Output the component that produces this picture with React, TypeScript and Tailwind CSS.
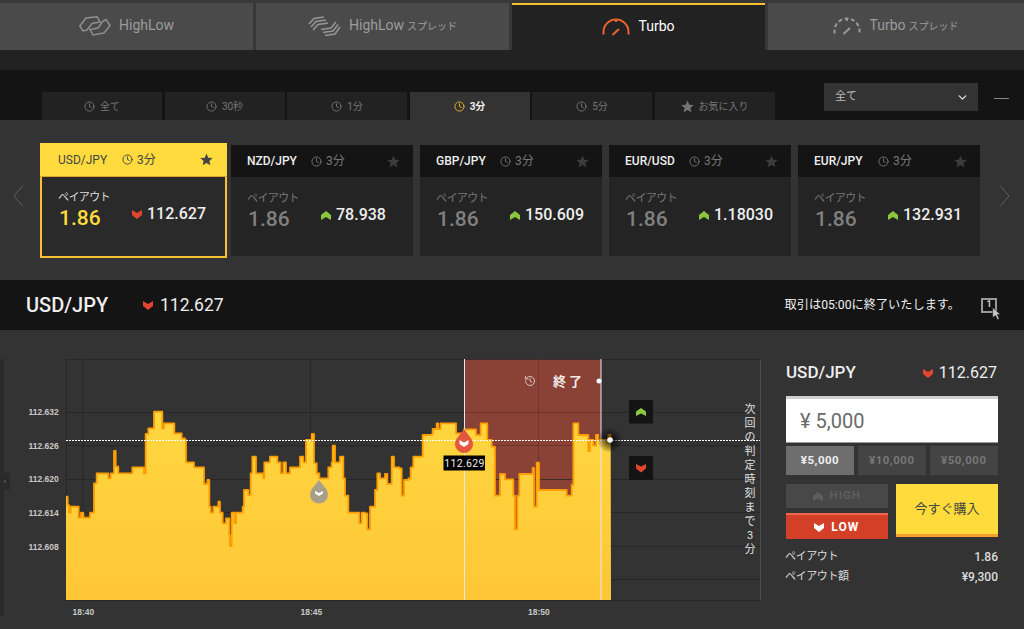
import { ChevronDown, Clock, History } from 'lucide-react'

const pairs = [
  { name: 'USD/JPY', price: '112.627', down: true, active: true },
  { name: 'NZD/JPY', price: '78.938' },
  { name: 'GBP/JPY', price: '150.609' },
  { name: 'EUR/USD', price: '1.18030' },
  { name: 'EUR/JPY', price: '132.931' },
]

const filters = ['全て', '30秒', '1分', '3分', '5分', 'お気に入り']

// traced off the reference, in 3x crop coordinates
const traceA = [
  [198, 440], [203, 465], [207, 488], [212, 470], [230, 470], [236, 503], [243, 488], [250, 503], [268, 503], [270, 488],
  [278, 488], [282, 400], [290, 370], [322, 370], [325, 385], [332, 370], [340, 370], [342, 303], [347, 350], [355, 370],
  [385, 370], [397, 352], [428, 352], [432, 370], [437, 252], [445, 235], [455, 235], [462, 185], [483, 185], [487, 235],
  [492, 220], [520, 220], [523, 250], [545, 265], [555, 270], [558, 337], [578, 337], [582, 352], [610, 352], [612, 402],
  [622, 390], [628, 470], [632, 488], [640, 470], [655, 455], [660, 488], [668, 520], [678, 505], [688, 555], [690, 588],
  [695, 488], [703, 520], [708, 488], [728, 470], [732, 420], [745, 435], [752, 370], [757, 320], [768, 370], [790, 385],
  [793, 337], [805, 337], [810, 320], [828, 320], [832, 337], [842, 370], [850, 337], [858, 370], [870, 352], [895, 352],
  [900, 320], [910, 337], [918, 270], [935, 252], [942, 340], [950, 370], [958, 385], [978, 385], [985, 352], [995, 337],
  [998, 287], [1005, 337], [1020, 320],
]
const traceB = [
  [10, 385], [15, 437], [25, 488], [50, 488], [58, 520], [65, 488], [75, 490], [82, 538], [90, 470], [105, 420],
  [112, 370], [120, 385], [135, 372], [142, 402], [155, 320], [162, 352], [178, 355], [185, 437], [192, 390], [205, 385],
  [212, 352], [220, 320], [240, 320], [248, 255], [275, 253], [278, 237], [290, 220], [295, 237], [302, 220], [330, 220],
  [348, 250], [372, 238], [398, 238], [408, 255], [422, 220], [438, 220], [442, 270], [455, 290], [465, 437], [480, 372],
  [490, 372], [495, 388], [510, 388], [520, 437], [525, 538], [532, 437], [538, 372], [578, 354], [582, 470], [590, 338],
  [597, 420], [665, 420], [680, 437], [695, 405], [700, 220], [715, 255], [735, 255], [745, 303], [750, 270], [760, 287],
  [768, 255], [775, 270], [805, 255], [812, 270],
]
const line = [
  ...traceA.map(([x, y]) => [x / 3, 350 + y / 3]),
  ...traceB.map(([x, y]) => [340 + x / 3, 350 + y / 3]),
]
const stepped = line.flatMap((p, i) => (i === 0 ? [p] : [[p[0], line[i - 1][1]], p]))
const linePts = stepped.map((p) => p.join(',')).join(' ')
const areaPts = `66,600 ${linePts} 611,600`

const yLabels = [
  ['112.632', 412],
  ['112.626', 445.5],
  ['112.620', 479],
  ['112.614', 512.5],
  ['112.608', 546.5],
] as const

function StarIcon({ className }: { className?: string }) {
  return (
    <svg viewBox="0 0 14 14" className={className} fill="currentColor">
      <path d="M7 0.5 L8.9 5 L13.7 5.4 L10.1 8.5 L11.2 13.3 L7 10.8 L2.8 13.3 L3.9 8.5 L0.3 5.4 L5.1 5 Z" />
    </svg>
  )
}

function Arrow({ down, className }: { down?: boolean; className?: string }) {
  return (
    <svg viewBox="0 0 10 9" className={className} fill="currentColor">
      {down ? <path d="M0 0 L5 3 L10 0 V5 L5 9 L0 5 Z" /> : <path d="M0 4 L5 0 L10 4 V9 L5 6 L0 9 Z" />}
    </svg>
  )
}

function HighLowIcon() {
  return (
    <svg viewBox="0 0 32 20" className="w-[32px] h-[20px]" fill="none" stroke="#8f8f8f" strokeWidth="1.5">
      <path d="M0.8 10 L7 2 L18 0.8 L21 6 L13 7.5 L8 14 L4 15 Z" />
      <path d="M31 9.5 L25 17 L14 19 L11 13.5 L19 12 L24 5 L27 3.5 Z" />
    </svg>
  )
}

function SpreadIcon() {
  return (
    <svg viewBox="0 0 33 20" className="w-[33px] h-[20px]" fill="none" stroke="#959595" strokeWidth="1.6">
      <path d="M1 8 L6 2.5 L16 1" />
      <path d="M3 11 L8 5.5 L18 4" />
      <path d="M5 14 L10 8.5 L20 7" />
      <path d="M28 6 L23 12 L13 13.5" />
      <path d="M30 8.5 L25 15 L15 16.5" />
      <path d="M32 11 L27 18 L17 19.5" />
    </svg>
  )
}

function GaugeIcon({ dashed }: { dashed?: boolean }) {
  const color = dashed ? '#9a9a9a' : '#e8632e'
  return (
    <svg viewBox="0 0 28 18" className="w-[28px] h-[18px]" fill="none" stroke={color} strokeWidth="2">
      <path d="M1.5 16.5 V14 A12.5 12.5 0 0 1 26.5 14 V16.5" strokeDasharray={dashed ? '4 2.5' : undefined} />
      <path d="M14 1.5 V4" />
      <path d="M10.5 17 L17 11" />
    </svg>
  )
}

function MainTab({ label, sub, active, icon, w }: { label: string; sub?: string; active?: boolean; icon: React.ReactNode; w: string }) {
  return (
    <div
      className={`${w} h-[47px] flex items-center justify-center gap-[8px] pb-[2px] ${
        active ? 'bg-[#222222] border-t-[2px] border-[#fbc02d] text-white' : 'bg-[#4a4a4a] text-[#9c9c9c]'
      }`}
    >
      {icon}
      <span className="text-[14px]">
        {label}
        {sub && <span className="text-[10px] ml-[3px]">{sub}</span>}
      </span>
    </div>
  )
}

function PairCard({ name, price, down, active }: { name: string; price: string; down?: boolean; active?: boolean }) {
  return (
    <div
      className={
        active
          ? 'w-[187px] h-[115px] -mt-[2px] mr-[4px] border-2 border-[#f8c135] bg-[#2a2a2a]'
          : 'w-[182px] h-[111px] mr-[7px] bg-[#242424]'
      }
    >
      <div
        className={`flex items-center ${
          active ? 'bg-[#ffdb3d] text-[#444444] pl-[16px] -mx-[2px] -mt-[2px] h-[34px] border-b border-[#d9a52c]' : 'h-[32px] bg-[#141414] text-[#eeeeee] pl-[16px]'
        }`}
      >
        <span className={`w-[64px] text-[12px] ${active ? 'ml-[2px]' : 'font-medium'}`}>{name}</span>
        <Clock className={`w-[11px] h-[11px] mr-[4px] ${active ? 'text-[#444444]' : 'text-[#777777]'}`} />
        <span className={`text-[12px] ${active ? '' : 'text-[#777777]'}`}>3分</span>
        <StarIcon className={`w-[13px] h-[13px] ml-auto ${active ? 'mr-[14px] text-[#444444]' : 'mr-[13px] text-[#3c3c3c]'}`} />
      </div>
      <div className={`flex pl-[16px] ${active ? 'pt-[13px]' : 'pt-[14px]'}`}>
        <div className="w-[74px]">
          <div className={`text-[11px] leading-[16px] tracking-[-0.6px] ${active ? 'text-[#dddddd]' : 'text-[#777777]'}`}>ペイアウト</div>
          <div className={`text-[21px] leading-[24px] font-medium ml-[1px] ${active ? 'text-[#ffdb3d]' : 'text-[#808080]'}`}>1.86</div>
        </div>
        <div className="flex items-center gap-[5px] h-[20px] mt-[14px]">
          <Arrow down={down} className={`w-[10px] h-[9px] ${down ? 'text-[#e2452f]' : 'text-[#8cc63f]'}`} />
          <span className="text-[16px] font-medium text-[#eeeeee]">{price}</span>
        </div>
      </div>
    </div>
  )
}

function Thin({ flip }: { flip?: boolean }) {
  return (
    <svg viewBox="0 0 11 22" className="w-[11px] h-[22px]" fill="none" stroke="#5f5f5f" strokeWidth="1">
      <path d={flip ? 'M1 0.5 L10 11 L1 21.5' : 'M10 0.5 L1 11 L10 21.5'} />
    </svg>
  )
}

function Chart() {
  return (
    <svg viewBox="4 359 757 270" className="w-[757px] h-[270px] shrink-0">
      <defs>
        <linearGradient id="area" x1="0" y1="0" x2="0" y2="1">
          <stop offset="0" stopColor="#ffd740" />
          <stop offset="1" stopColor="#ffc636" />
        </linearGradient>
        <radialGradient id="glow">
          <stop offset="0" stopColor="#000000" stopOpacity="0.85" />
          <stop offset="1" stopColor="#000000" stopOpacity="0" />
        </radialGradient>
      </defs>

      <rect x="464" y="359" width="137" height="241" fill="#8a4136" />

      <g stroke="#242424" strokeOpacity="0.75" strokeWidth="1">
        {[359.5, 412.5, 445.5, 479.5, 512.5, 546.5, 579.5, 600.5].map((y) => (
          <line key={y} x1="66" x2="760" y1={y} y2={y} />
        ))}
        {[66.5, 83, 310.5].map((x) => (
          <line key={x} x1={x} x2={x} y1="359" y2="600" />
        ))}
      </g>
      <g stroke="#6f352b" strokeWidth="1">
        <line x1="538.5" x2="538.5" y1="359" y2="600" />
        <line x1="464" x2="601" y1="412.5" y2="412.5" />
        <line x1="464" x2="601" y1="445.5" y2="445.5" />
      </g>
      <line x1="760.5" x2="760.5" y1="360" y2="600" stroke="#4c4c4c" />

      <polygon points={areaPts} fill="url(#area)" />
      <polyline points={linePts} fill="none" stroke="#ff9d00" strokeWidth="1.8" strokeLinejoin="round" />

      <line x1="464.5" x2="464.5" y1="359" y2="600" stroke="#e8e8e8" />
      <line x1="601" x2="601" y1="359" y2="600" stroke="#e8e8e8" />
      <line x1="66" x2="760" y1="440.5" y2="440.5" stroke="#ffffff" strokeDasharray="2 1" />

      <circle cx="610" cy="440" r="13" fill="url(#glow)" />
      <circle cx="610" cy="440" r="2.8" fill="#ffffff" />
      <circle cx="599" cy="381" r="2.5" fill="#ffffff" />

      <History x="524" y="375" width="12" height="12" stroke="#d9c4bf" />
      <text x="553" y="386" fontSize="13" fontWeight="700" fill="#f2ebe9" letterSpacing="3">終了</text>

      <path d="M464 429 L471.5 439 A9 9 0 1 1 456.5 439 Z" fill="#e5573d" />
      <path d="M459.5 440 L464 442.5 L468.5 440 V444 L464 447 L459.5 444 Z" fill="#ffffff" />
      <rect x="443.5" y="455.5" width="41.5" height="15" fill="#000000" />
      <text x="464.5" y="467" fontSize="10.5" textAnchor="middle" fill="#eeeeee" letterSpacing="0.3">112.629</text>

      <path d="M319 480 L326.5 489.5 A9 9 0 1 1 311.5 489.5 Z" fill="#a89f8a" />
      <path d="M315 491 L319 493 L323 491 V493.5 L319 496 L315 493.5 Z" fill="#ffffff" />

      <rect x="629" y="400" width="24" height="23.5" fill="#141414" />
      <path d="M636 411.5 L641 408 L646 411.5 V416 L641 413.5 L636 416 Z" fill="#8cc63f" />
      <rect x="629" y="456" width="24" height="24" fill="#141414" />
      <path d="M636 464 L641 466.5 L646 464 V468.5 L641 472.5 L636 468.5 Z" fill="#e2452f" />

      <g fontFamily="'Liberation Sans', sans-serif" fontSize="8.5" fontWeight="700" fill="#c8c8c8">
        {yLabels.map(([t, y]) => (
          <text key={t} x="28.5" y={y + 3}>{t}</text>
        ))}
        <text x="72.5" y="615">18:40</text>
        <text x="300.5" y="615">18:45</text>
        <text x="528" y="615">18:50</text>
      </g>

      <g fontSize="11" fill="#e0e0e0" textAnchor="middle">
        {['次', '回', 'の', '判', '定', '時', '刻', 'ま', 'で', '3', '分'].map((c, i) => (
          <text key={i} x="750" y={413 + i * 14}>{c}</text>
        ))}
      </g>
    </svg>
  )
}

export default function App() {
  return (
    <div className="w-[1024px] h-[629px] overflow-hidden flex flex-col bg-[#333333] font-[Roboto,'Noto_Sans_CJK_JP',sans-serif]">
      {/* Tabs */}
      <div className="h-[50px] pt-[3px] flex gap-[3px] bg-[#383838]">
        <MainTab w="w-[253px]" label="HighLow" icon={<HighLowIcon />} />
        <MainTab w="w-[253px]" label="HighLow" sub="スプレッド" icon={<SpreadIcon />} />
        <MainTab w="w-[253px]" label="Turbo" active icon={<GaugeIcon />} />
        <MainTab w="w-[256px]" label="Turbo" sub="スプレッド" icon={<GaugeIcon dashed />} />
      </div>
      <div className="h-[20px] bg-[#222222]" />

      {/* Filter */}
      <div className="h-[50px] bg-[#141414] flex pl-[42px]">
        <div className="flex gap-[2.5px] mt-[22px]">
          {filters.map((f) => {
            const on = f === '3分'
            return (
              <div
                key={f}
                className={`w-[120px] h-[28px] flex items-center justify-center gap-[5px] text-[10px] ${
                  on ? 'bg-[#333333] text-[#eeeeee] font-bold' : 'bg-[#222222] text-[#757575]'
                }`}
              >
                {f === 'お気に入り' ? (
                  <StarIcon className="w-[13px] h-[13px] text-[#757575]" />
                ) : (
                  <Clock className={`w-[11px] h-[11px] ${on ? 'text-[#f0b429]' : 'text-[#757575]'}`} />
                )}
                <span>{f}</span>
              </div>
            )
          })}
        </div>
        <div className="w-[154px] h-[28px] ml-[49.5px] mt-[13px] pt-[1px] bg-[#333333] flex items-center justify-between pl-[11px] pr-[9px] text-[11px] text-[#bbbbbb]">
          全て
          <ChevronDown className="w-[13px] h-[13px] text-[#dddddd]" strokeWidth={2.5} />
        </div>
        <div className="w-[15px] h-px ml-[16px] mt-[28px] bg-[#888888]" />
      </div>

      {/* Pairs */}
      <div className="h-[160px] flex items-start pt-[25px] pl-[13px]">
        <div className="mt-[40px] mr-[16px]">
          <Thin />
        </div>
        {pairs.map((p) => (
          <PairCard key={p.name} {...p} />
        ))}
        <div className="mt-[40px] ml-[12px]">
          <Thin flip />
        </div>
      </div>

      {/* Selected pair */}
      <div className="h-[50px] bg-[#141414] flex items-center pl-[26px] text-[#eeeeee]">
        <span className="w-[117px] text-[20px] font-medium">USD/JPY</span>
        <Arrow down className="w-[10px] h-[9px] text-[#e2452f]" />
        <span className="ml-[7px] text-[17.5px]">112.627</span>
        <span className="ml-auto text-[12.2px]">取引は05:00に終了いたします。</span>
        <div className="relative w-[16px] h-[15px] ml-[21px] mr-[27px] border-2 border-[#999999] flex items-center justify-center text-[9px] font-bold text-[#cccccc]">
          1
          <svg viewBox="0 0 8 12" className="absolute left-[9px] top-[7px] w-[9px] h-[13px]" fill="#c8c8c8" stroke="#141414" strokeWidth="0.5">
            <path d="M0.5 0.5 L7.5 7 L4.8 7 L6.5 11 L4.8 11.6 L3.2 7.8 L0.5 9.8 Z" />
          </svg>
        </div>
      </div>

      {/* Chart + order panel */}
      <div className="relative flex-1 flex items-start pt-[29px]">
        <div className="w-[4px] h-[257px] bg-[#2a2a2a]" />
        <div className="absolute left-0 top-[143px] w-[10px] h-[17px] bg-[#2a2a2a] flex items-center justify-center text-[8px] leading-none text-[#888888]">›</div>
        <Chart />
        <div className="w-[212px] ml-[25px] flex flex-col">
          <div className="h-[22px] mt-[3px] flex items-center justify-between text-[#eeeeee]">
            <span className="text-[17px] font-medium">USD/JPY</span>
            <span className="text-[16px] flex items-center gap-[6px] mr-[1px]">
              <Arrow down className="w-[10px] h-[9px] text-[#e2452f]" />
              112.627
            </span>
          </div>
          <div className="mt-[12px] h-[47px] bg-white border-t-[3px] border-[#cfcfcf] border-b border-b-[#9a9a9a] flex items-center pl-[14px] pt-[1px] text-[20px] text-[#6a6a6a]">¥ 5,000</div>
          <div className="mt-[3px] flex gap-[3.5px]">
            <div className="w-[68px] h-[29px] bg-[#6e6e6e] text-[#f0f0f0] text-[11.5px] font-bold tracking-[0.5px] flex items-center justify-center">¥5,000</div>
            <div className="w-[68.5px] h-[29px] bg-[#444444] text-[#777777] text-[11.5px] font-bold tracking-[0.5px] flex items-center justify-center">¥10,000</div>
            <div className="w-[68.5px] h-[29px] bg-[#444444] text-[#777777] text-[11.5px] font-bold tracking-[0.5px] flex items-center justify-center">¥50,000</div>
          </div>
          <div className="mt-[9px] flex justify-between">
            <div className="w-[101.5px]">
              <div className="h-[24px] bg-[#484848] text-[#5e5e5e] text-[11.5px] font-bold tracking-[1px] flex items-center justify-center gap-[7px]">
                <Arrow className="w-[10px] h-[9px]" />
                HIGH
              </div>
              <div className="mt-[5px] h-[26px] bg-[#d43f27] border-t-2 border-[#f0694f] text-white text-[12px] font-bold tracking-[1px] flex items-center justify-center gap-[7px]">
                <Arrow down className="w-[10px] h-[9px]" />
                LOW
              </div>
            </div>
            <div className="w-[102px] h-[53px] pb-[1px] bg-[#ffdc3c] border-b-[3px] border-[#f59f2e] text-[#444444] text-[13px] flex items-center justify-center">今すぐ購入</div>
          </div>
          <div className="mt-[8px] flex justify-between items-center text-[11px] leading-[20px] text-[#dddddd]">
            <span className="tracking-[-0.4px] -ml-[1px]">ペイアウト</span>
            <span className="text-[12px] font-medium">1.86</span>
          </div>
          <div className="flex justify-between items-center text-[11px] leading-[20px] text-[#dddddd]">
            <span className="tracking-[-0.4px] -ml-[1px]">ペイアウト額</span>
            <span className="text-[12px] font-medium">¥9,300</span>
          </div>
        </div>
      </div>
    </div>
  )
}
